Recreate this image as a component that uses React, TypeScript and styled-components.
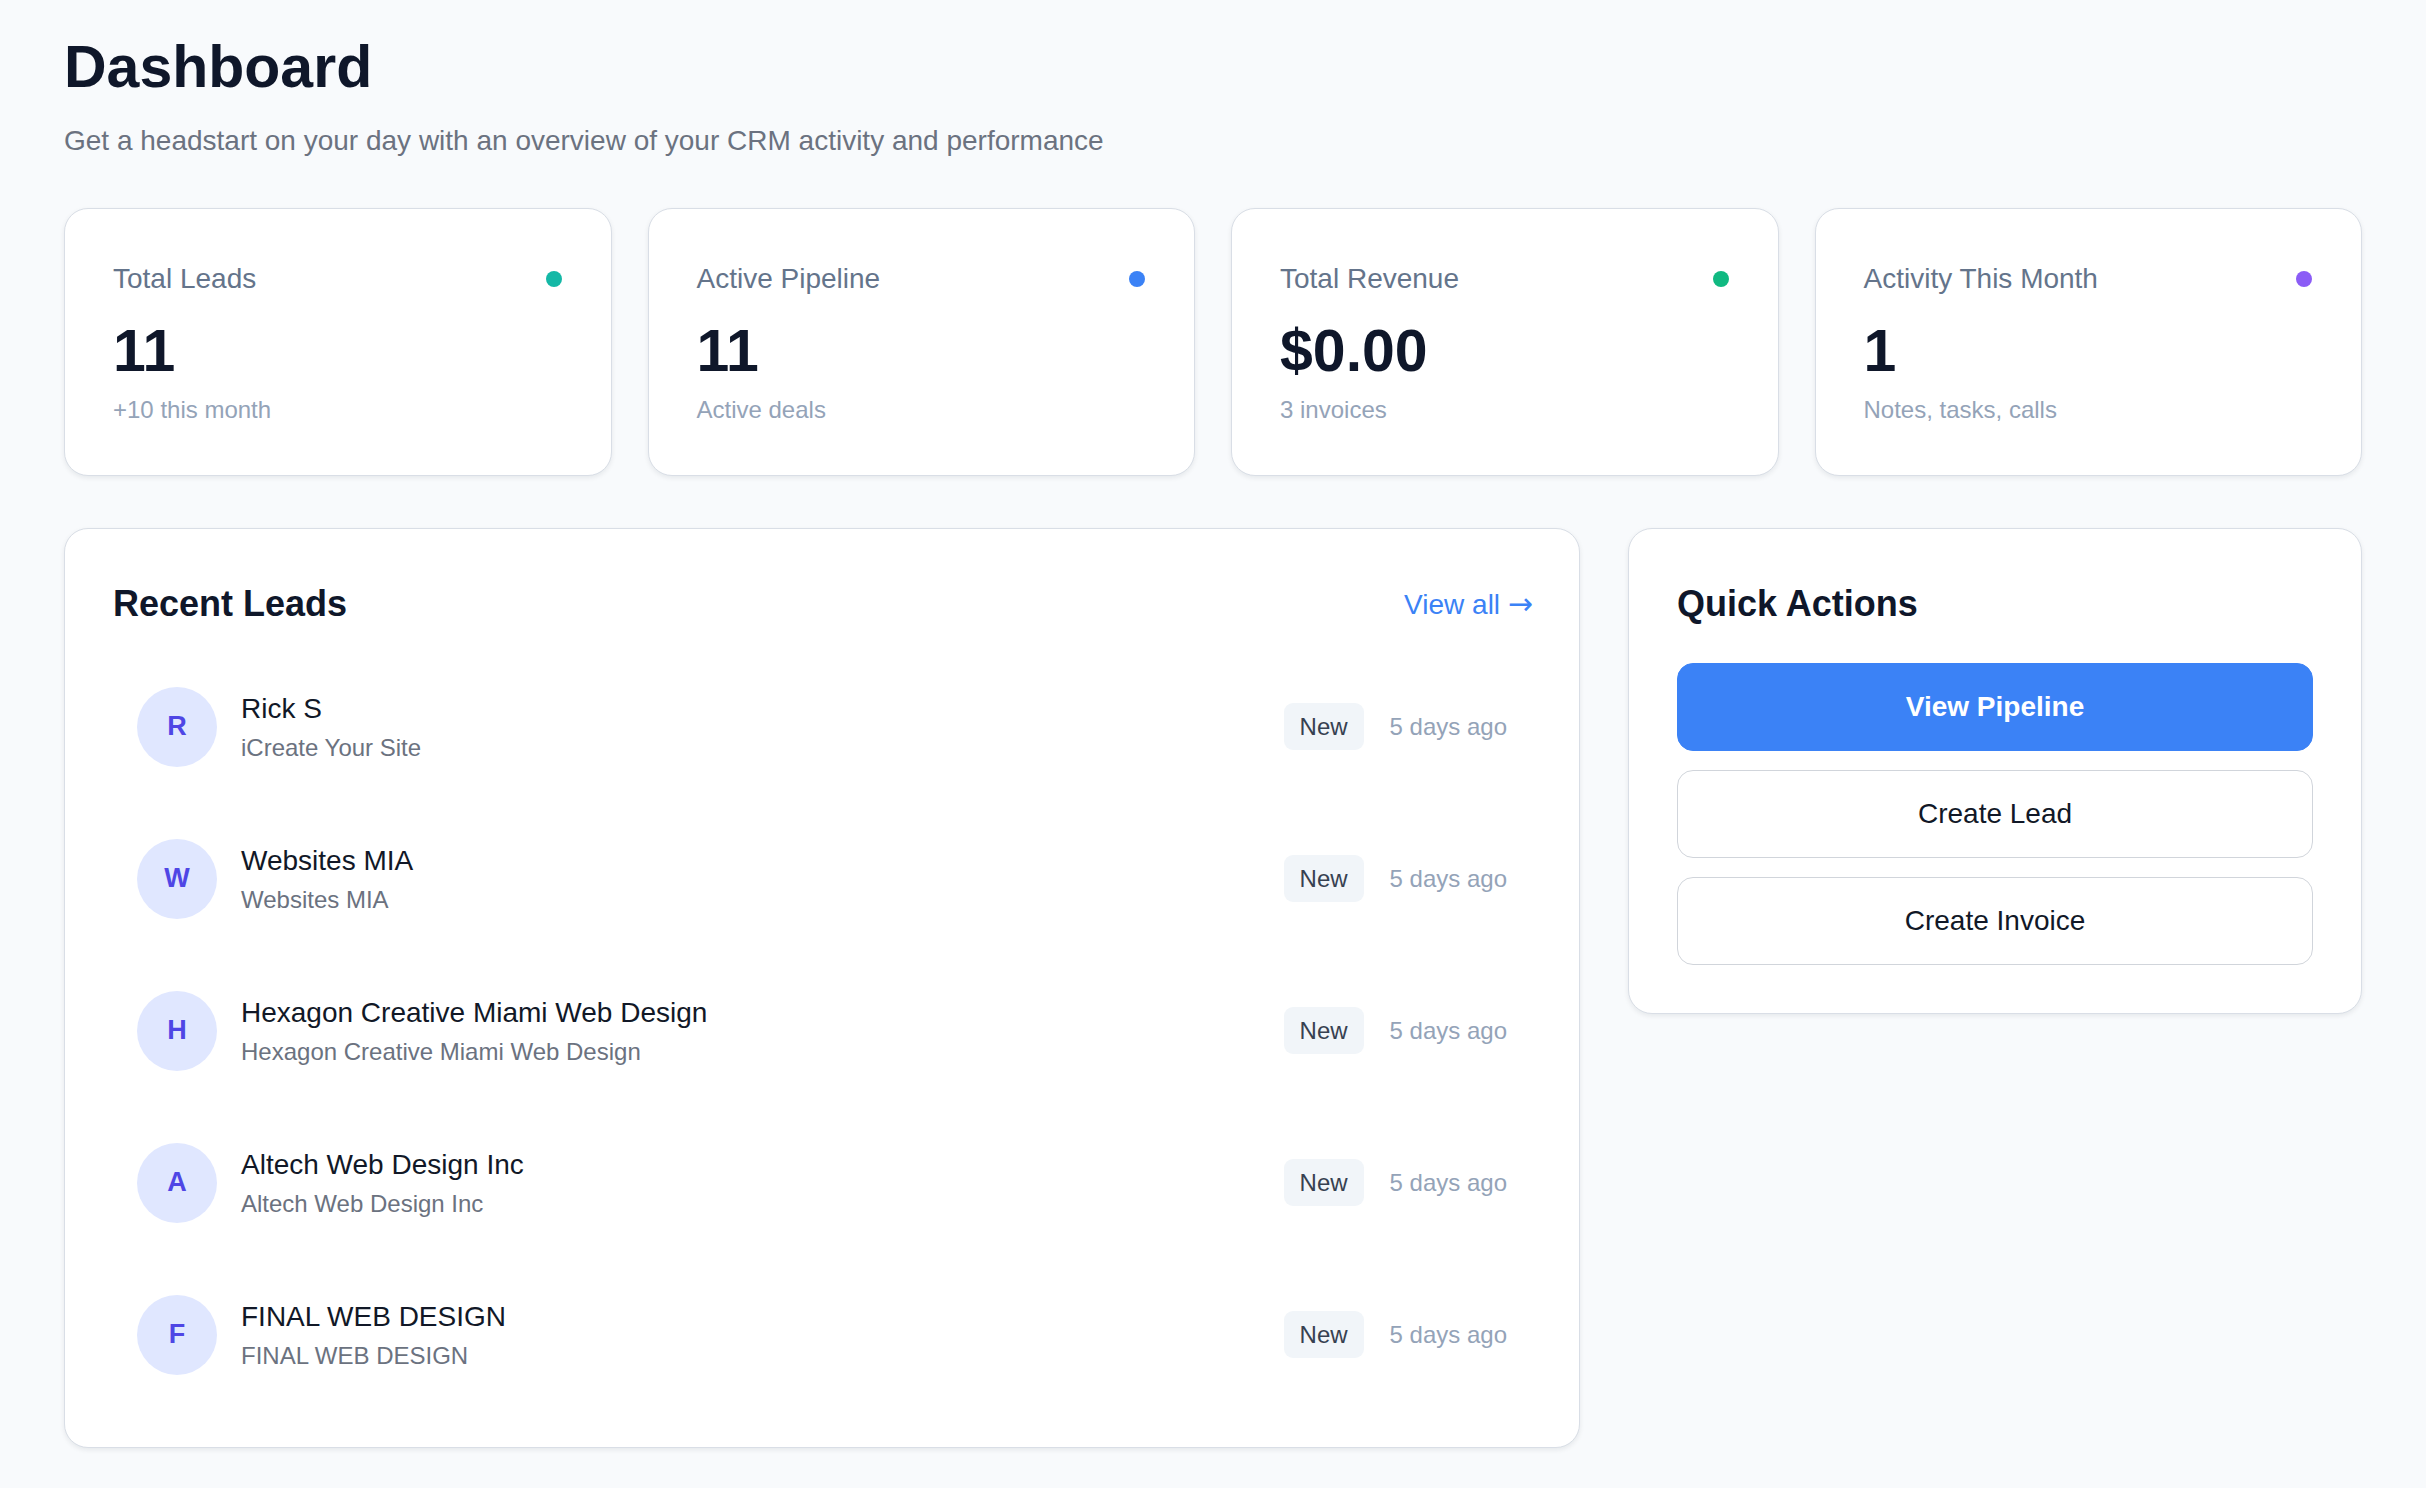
import React from "react";
import styled, { createGlobalStyle } from "styled-components";

const GlobalStyle = createGlobalStyle`
  html, body {
    margin: 0;
    padding: 0;
    background: #f8fafc;
    font-family: "Liberation Sans", Arial, Helvetica, sans-serif;
    color: #111827;
  }
  * {
    box-sizing: border-box;
  }
`;

const Page = styled.div`
  min-height: 100vh;
  padding: 32px 64px 48px;
`;

const Title = styled.h1`
  margin: 0;
  font-size: 59px;
  line-height: 1.2;
  font-weight: 700;
  color: #0f172a;
`;

const Subtitle = styled.p`
  margin: 17px 0 0;
  font-size: 28px;
  line-height: 1.5;
  color: #6b7280;
`;

const StatsGrid = styled.div`
  display: grid;
  grid-template-columns: repeat(4, 1fr);
  gap: 36px;
  margin-top: 46px;
`;

const Card = styled.div`
  background: #ffffff;
  border: 1.5px solid #d9dee6;
  border-radius: 24px;
  box-shadow: 0 2px 5px rgba(15, 23, 42, 0.08);
`;

const StatCard = styled(Card)`
  padding: 49px 48px 47px;
`;

const StatHead = styled.div`
  display: flex;
  align-items: center;
  justify-content: space-between;
`;

const StatLabel = styled.div`
  font-size: 28px;
  line-height: 1.5;
  color: #64748b;
`;

const Dot = styled.span<{ $color: string }>`
  width: 16px;
  height: 16px;
  border-radius: 50%;
  background: ${(p) => p.$color};
  margin-right: 1px;
`;

const StatValue = styled.div`
  margin-top: 16px;
  font-size: 59px;
  line-height: 1.2;
  font-weight: 700;
  color: #0f172a;
`;

const StatSub = styled.div`
  margin-top: 5px;
  font-size: 24px;
  line-height: 1.5;
  color: #94a3b8;
`;

const LowerGrid = styled.div`
  display: grid;
  grid-template-columns: repeat(3, 1fr);
  gap: 48px;
  margin-top: 52px;
  align-items: start;
`;

const Panel = styled(Card)<{ $span?: number }>`
  padding: 48px;
  grid-column: span ${(p) => p.$span ?? 1};
`;

const PanelHeader = styled.div`
  display: flex;
  align-items: center;
  justify-content: space-between;
  margin-bottom: 32px;
`;

const PanelTitle = styled.h2`
  margin: 0;
  font-size: 36px;
  line-height: 1.5;
  font-weight: 700;
  color: #0f172a;
`;

const ViewAll = styled.a`
  font-size: 28px;
  color: #3b82f6;
  text-decoration: none;
  cursor: pointer;
  margin-right: -2px;
`;

const Arrow = styled.span`
  font-family: "DejaVu Sans", sans-serif;
  font-size: 30px;
`;

const LeadList = styled.div`
  display: flex;
  flex-direction: column;
  gap: 24px;
`;

const LeadRow = styled.div`
  display: flex;
  align-items: center;
  padding: 24px;
  border-radius: 16px;
`;

const Avatar = styled.div`
  width: 80px;
  height: 80px;
  border-radius: 50%;
  background: #e0e7ff;
  color: #4f46e5;
  font-size: 27px;
  font-weight: 700;
  display: flex;
  align-items: center;
  justify-content: center;
  flex-shrink: 0;
`;

const LeadInfo = styled.div`
  flex: 1;
  margin-left: 24px;
  min-width: 0;
`;

const LeadName = styled.div`
  font-size: 28px;
  line-height: 1.5;
  color: #111827;
`;

const LeadCompany = styled.div`
  font-size: 24px;
  line-height: 1.5;
  color: #6b7280;
`;

const LeadMeta = styled.div`
  display: flex;
  align-items: center;
  gap: 26px;
`;

const Badge = styled.span`
  background: #f1f5f9;
  color: #374151;
  font-size: 24px;
  line-height: 35px;
  padding: 6px 16px;
  border-radius: 9px;
`;

const TimeAgo = styled.span`
  font-size: 24px;
  color: #94a3b8;
`;

const ActionList = styled.div`
  display: flex;
  flex-direction: column;
  gap: 19px;
`;

const ActionButton = styled.button<{ $primary?: boolean }>`
  width: 100%;
  font-family: inherit;
  font-size: 28px;
  line-height: 42px;
  padding: 22px 16px;
  border-radius: 16px;
  cursor: pointer;
  font-weight: ${(p) => (p.$primary ? 700 : 400)};
  color: ${(p) => (p.$primary ? "#ffffff" : "#111827")};
  background: ${(p) => (p.$primary ? "#3b82f6" : "#ffffff")};
  border: 1.5px solid ${(p) => (p.$primary ? "#3b82f6" : "#d1d5db")};
`;

const stats = [
  { label: "Total Leads", value: "11", sub: "+10 this month", color: "#14b8a6" },
  { label: "Active Pipeline", value: "11", sub: "Active deals", color: "#3b82f6" },
  { label: "Total Revenue", value: "$0.00", sub: "3 invoices", color: "#10b981" },
  { label: "Activity This Month", value: "1", sub: "Notes, tasks, calls", color: "#8b5cf6" },
];

const leads = [
  { name: "Rick S", company: "iCreate Your Site" },
  { name: "Websites MIA", company: "Websites MIA" },
  { name: "Hexagon Creative Miami Web Design", company: "Hexagon Creative Miami Web Design" },
  { name: "Altech Web Design Inc", company: "Altech Web Design Inc" },
  { name: "FINAL WEB DESIGN", company: "FINAL WEB DESIGN" },
];

export default function App() {
  return (
    <>
      <GlobalStyle />
      <Page>
        <Title>Dashboard</Title>
        <Subtitle>
          Get a headstart on your day with an overview of your CRM activity and performance
        </Subtitle>

        <StatsGrid>
          {stats.map((s) => (
            <StatCard key={s.label}>
              <StatHead>
                <StatLabel>{s.label}</StatLabel>
                <Dot $color={s.color} />
              </StatHead>
              <StatValue>{s.value}</StatValue>
              <StatSub>{s.sub}</StatSub>
            </StatCard>
          ))}
        </StatsGrid>

        <LowerGrid>
          <Panel $span={2}>
            <PanelHeader>
              <PanelTitle>Recent Leads</PanelTitle>
              <ViewAll>
                View all <Arrow>→</Arrow>
              </ViewAll>
            </PanelHeader>
            <LeadList>
              {leads.map((l) => (
                <LeadRow key={l.name}>
                  <Avatar>{l.name.charAt(0).toUpperCase()}</Avatar>
                  <LeadInfo>
                    <LeadName>{l.name}</LeadName>
                    <LeadCompany>{l.company}</LeadCompany>
                  </LeadInfo>
                  <LeadMeta>
                    <Badge>New</Badge>
                    <TimeAgo>5 days ago</TimeAgo>
                  </LeadMeta>
                </LeadRow>
              ))}
            </LeadList>
          </Panel>

          <Panel>
            <PanelHeader>
              <PanelTitle>Quick Actions</PanelTitle>
            </PanelHeader>
            <ActionList>
              <ActionButton $primary>View Pipeline</ActionButton>
              <ActionButton>Create Lead</ActionButton>
              <ActionButton>Create Invoice</ActionButton>
            </ActionList>
          </Panel>
        </LowerGrid>
      </Page>
    </>
  );
}
